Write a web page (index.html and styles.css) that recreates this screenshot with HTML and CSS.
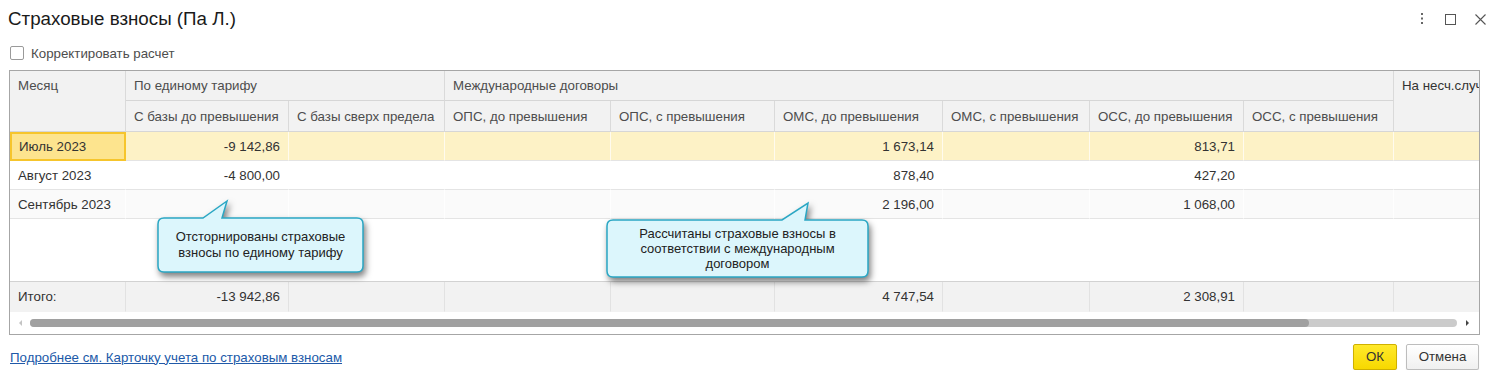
FILE: index.html
```html
<!DOCTYPE html>
<html lang="ru">
<head>
	<meta charset="utf-8"/>
	<title>Страховые взносы</title>
	<link rel="stylesheet" href="styles.css">
</head>
<body>

<div class="dialog">
	<!--заголовок окна-->
	<div class="dialog-head">
		<h1 class="dialog-title">Страховые взносы (Па Л.)</h1>
		<div class="dialog-tools">
			<svg class="tool" width="4" height="12" viewBox="0 0 4 12"><rect x="1" y="0" width="2" height="2"/><rect x="1" y="4.5" width="2" height="2"/><rect x="1" y="9" width="2" height="2"/></svg>
			<svg class="tool tool-max" width="11" height="11" viewBox="0 0 11 11"><rect x="0.5" y="0.5" width="10" height="10" fill="none" stroke="#555"/></svg>
			<svg class="tool" width="11" height="11" viewBox="0 0 11 11"><path d="M0.5 0.5L10.5 10.5M10.5 0.5L0.5 10.5" stroke="#555" stroke-width="1.1" fill="none"/></svg>
		</div>
	</div>

	<label class="correct"><span class="correct__box"></span>Корректировать расчет</label>

	<!--таблица взносов-->
	<div class="frame">
		<div class="grid">
			<div class="c h h-month">Месяц</div>
			<div class="c h h-single">По единому тарифу</div>
			<div class="c h h-intl">Международные договоры</div>
			<div class="c h h-acc">На несч.случ</div>

			<div class="c h">С базы до превышения</div>
			<div class="c h">С базы сверх предела</div>
			<div class="c h">ОПС, до превышения</div>
			<div class="c h">ОПС, с превышения</div>
			<div class="c h">ОМС, до превышения</div>
			<div class="c h">ОМС, с превышения</div>
			<div class="c h">ОСС, до превышения</div>
			<div class="c h">ОСС, с превышения</div>

			<div class="c d cur d-sel">Июль 2023</div>
			<div class="c d cur r">-9 142,86</div>
			<div class="c d cur"></div>
			<div class="c d cur"></div>
			<div class="c d cur"></div>
			<div class="c d cur r">1 673,14</div>
			<div class="c d cur"></div>
			<div class="c d cur r">813,71</div>
			<div class="c d cur"></div>
			<div class="c d cur"></div>

			<div class="c d">Август 2023</div>
			<div class="c d r">-4 800,00</div>
			<div class="c d"></div>
			<div class="c d"></div>
			<div class="c d"></div>
			<div class="c d r">878,40</div>
			<div class="c d"></div>
			<div class="c d r">427,20</div>
			<div class="c d"></div>
			<div class="c d"></div>

			<div class="c d alt">Сентябрь 2023</div>
			<div class="c d alt"></div>
			<div class="c d alt"></div>
			<div class="c d alt"></div>
			<div class="c d alt"></div>
			<div class="c d alt r">2 196,00</div>
			<div class="c d alt"></div>
			<div class="c d alt r">1 068,00</div>
			<div class="c d alt"></div>
			<div class="c d alt"></div>

			<div class="filler"></div>

			<div class="c f">Итого:</div>
			<div class="c f r">-13 942,86</div>
			<div class="c f"></div>
			<div class="c f"></div>
			<div class="c f"></div>
			<div class="c f r">4 747,54</div>
			<div class="c f"></div>
			<div class="c f r">2 308,91</div>
			<div class="c f"></div>
			<div class="c f"></div>
		</div>

		<div class="hscroll">
			<span class="hscroll__arrow hscroll__arrow_left"></span>
			<div class="hscroll__track"><div class="hscroll__thumb"></div></div>
			<span class="hscroll__arrow hscroll__arrow_right"></span>
		</div>

		<!--подсказки-->
		<div class="callout callout-1">
			<svg class="callout__shape" width="215" height="82" viewBox="0 0 215 82">
				<path d="M9 20L48 20L72 3L67 20L202 20Q208 20 208 26L208 68Q208 74 202 74L9 74Q3 74 3 68L3 26Q3 20 9 20Z"/>
			</svg>
			<div class="callout__text">Отсторнированы страховые<br>взносы по единому тарифу</div>
		</div>
		<div class="callout callout-2">
			<svg class="callout__shape" width="270" height="85" viewBox="0 0 270 85">
				<path d="M9 20L178 20L204 3L201 20L258 20Q264 20 264 26L264 71Q264 77 258 77L9 77Q3 77 3 71L3 26Q3 20 9 20Z"/>
			</svg>
			<div class="callout__text">Рассчитаны страховые взносы в<br>соответствии с международным<br>договором</div>
		</div>
	</div>

	<div class="dialog-foot">
		<a class="more-link" href="javascript:void(0);">Подробнее см. Карточку учета по страховым взносам</a>
		<div class="dialog-btns">
			<a class="btn btn_ok" href="javascript:void(0);">ОК</a>
			<a class="btn" href="javascript:void(0);">Отмена</a>
		</div>
	</div>
</div>

</body>
</html>
```

FILE: styles.css
```css
html,body{
	margin: 0;
	padding: 0;
	background: #fff;
}
body{
	font-family: "Liberation Sans", Arial, sans-serif;
	font-size: 13.3px;
	color: #333;
}
.dialog{
	width: 1498px;
}
/*заголовок*/
.dialog-head{
	height: 38px;
	display: flex;
	justify-content: space-between;
	align-items: flex-start;
}
.dialog-title{
	margin: 0;
	padding: 8px 0 0 8px;
	font-size: 18.75px;
	line-height: 22px;
	font-weight: normal;
	color: #1a1a1a;
}
.dialog-tools{
	display: flex;
	align-items: center;
	padding: 13px 12px 0 0;
}
.tool{
	display: block;
	fill: #666;
}
.tool-max{
	margin: 0 19px 0 21px;
}
/*флажок*/
.correct{
	height: 30px;
	display: flex;
	align-items: center;
	padding-left: 10px;
	color: #4d4d4d;
}
.correct__box{
	width: 14px;
	height: 14px;
	box-sizing: border-box;
	border: 1px solid #9a9a9a;
	border-radius: 2px;
	background: #fff;
	margin-right: 7px;
}
/*рамка таблицы*/
.frame{
	position: relative;
	margin: 2px 0 0 9px;
	width: 1471px;
	box-sizing: border-box;
	border: 1px solid #a6a6a6;
	overflow: hidden;
}
.grid{
	display: grid;
	grid-template-columns: 116px 163px 156px 166px 164px 168px 147px 154px 150px 150px;
	grid-template-rows: 30px 31px 29px 29px 29px 63px 30px;
}
.c{
	box-sizing: border-box;
	display: flex;
	align-items: center;
	padding: 0 8px;
	white-space: nowrap;
	overflow: hidden;
	border-right: 1px solid transparent;
	border-bottom: 1px solid transparent;
}
.r{
	justify-content: flex-end;
}
.h{
	background: #f2f2f2;
	color: #4d4d4d;
	border-right-color: #dadada;
	border-bottom-color: #d6d6d6;
}
.h-month{
	grid-row: 1 / 3;
	grid-column: 1;
	align-items: flex-start;
	padding-top: 7px;
}
.h-single{
	grid-row: 1;
	grid-column: 2 / 4;
}
.h-intl{
	grid-row: 1;
	grid-column: 4 / 10;
}
.h-acc{
	grid-row: 1 / 3;
	grid-column: 10;
	align-items: flex-start;
	padding-top: 7px;
	color: #333;
}
.d{
	background: #fff;
	border-right-color: rgba(255,255,255,0.7);
	border-bottom-color: #e4e4e4;
}
.d.alt{
	background: #fafafa;
}
.d.cur{
	background: #fdf2c6;
}
.d.d-sel{
	background: #fde48e;
	border: 2px solid #f6c52c;
	padding-left: 7px;
}
.filler{
	grid-column: 1 / -1;
	border-bottom: 1px solid #d2d2d2;
	background: #fff;
}
.f{
	background: #f2f2f2;
	border-right-color: #e2e2e2;
}
/*горизонтальная прокрутка*/
.hscroll{
	height: 22px;
	display: flex;
	align-items: center;
}
.hscroll__arrow{
	width: 0;
	height: 0;
	border-top: 3px solid transparent;
	border-bottom: 3px solid transparent;
}
.hscroll__arrow_left{
	border-right: 3px solid #c4c4c4;
	margin: 0 8px 0 9px;
}
.hscroll__arrow_right{
	border-left: 3px solid #444;
	margin-left: 9px;
}
.hscroll__track{
	width: 1427px;
	height: 8px;
	border-radius: 4px;
	background: #cbcbcb;
}
.hscroll__thumb{
	width: 1279px;
	height: 8px;
	border-radius: 4px;
	background: #a0a0a0;
}
/*выноски*/
.callout{
	position: absolute;
}
.callout-1{
	left: 145px;
	top: 127px;
	width: 215px;
	height: 82px;
}
.callout-2{
	left: 594px;
	top: 129px;
	width: 270px;
	height: 85px;
}
.callout__shape{
	position: absolute;
	left: 0;
	top: 0;
	overflow: visible;
	filter: drop-shadow(2px 4px 3px rgba(0,0,0,0.5));
}
.callout__shape path{
	fill: #dcf6fc;
	stroke: #2aa7c4;
	stroke-width: 1.5;
}
.callout__text{
	position: relative;
	margin-top: 20px;
	height: 54px;
	width: 211px;
	display: flex;
	align-items: center;
	justify-content: center;
	text-align: center;
	font-size: 13px;
	line-height: 16px;
	color: #222;
}
.callout-2 .callout__text{
	height: 57px;
	width: 267px;
	line-height: 15px;
}
/*низ окна*/
.dialog-foot{
	display: flex;
	justify-content: space-between;
	align-items: center;
	margin-top: 9px;
	padding: 0 19px 0 10px;
	height: 26px;
}
.more-link{
	color: #2059a8;
	text-decoration: underline;
}
.dialog-btns{
	display: flex;
	gap: 9px;
}
.btn{
	display: block;
	box-sizing: border-box;
	width: 73px;
	height: 26px;
	line-height: 24px;
	text-align: center;
	text-decoration: none;
	color: #333;
	border: 1px solid #bdbdbd;
	border-radius: 2px;
	background: linear-gradient(#ffffff, #f0f0f0);
	box-shadow: 0 1px 1px rgba(0,0,0,0.15);
}
.btn_ok{
	width: 44px;
	border-color: #cfb000;
	background: linear-gradient(#ffe92b, #f7d800);
}
```
